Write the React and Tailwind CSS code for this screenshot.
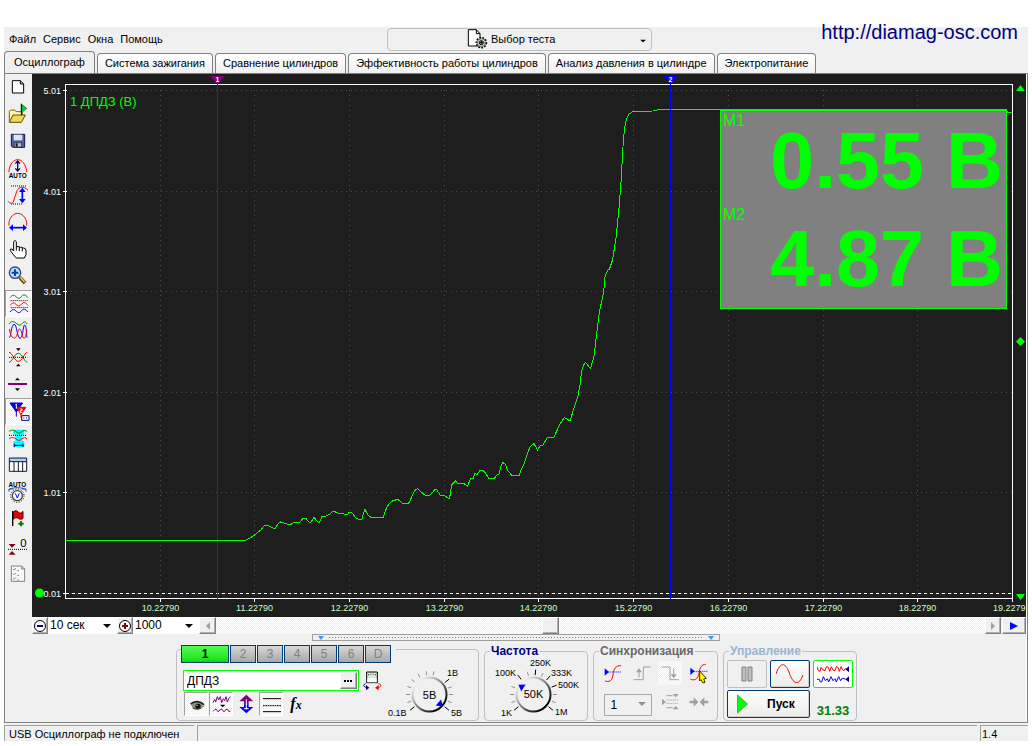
import React, { useState } from 'react';

const TABS = [
  'Осциллограф',
  'Система зажигания',
  'Сравнение цилиндров',
  'Эффективность работы цилиндров',
  'Анализ давления в цилиндре',
  'Электропитание',
];

const TRACE =
  '66,540.5 245.5,540.5 250,538 254,535.5 257,533 261,530 264,526 267.5,525.5 271,527 275,529 278,524 280.5,522 284,523 290,525 294,522.5 300,522 303,518.5 306,518.5 309,522 311,522 314,517.5 318,522 319.5,522 322,516.5 326,516 330,514 333,511 338,513 344,514 347,515 349,512.5 352,513 356,518 360,520 362,519 363.5,513 365,509.5 368,515 371,517.5 383,517.5 385,512 387,507 390,503 393,500.5 398,499.5 402,503 408,504 410,501 412,496 415,490.5 417.5,488.5 421,492 425,495 430,495 432,493 435,489.5 437,490 440,495 445,496 449,498.5 450.5,494 451.5,485 455.5,481 458,484 463,483 467.5,486 471,478 473,479 475,473.5 477,474.5 480,470.5 483,470 486,474 489,478.5 494,479 497,475 499,474 501,466 503,462.5 505,464 508,471 512,475.5 519,475.5 521,470 524,464 528,452 530,447 534,443.5 537.5,450 540,446 543,445 547,438 549,437 554,437 560,424 564.5,417.5 570,421 575,405 578,396 580,385 581.5,371.5 583.5,365 585.5,362.5 590.5,368.5 594,356.5 596.5,335 599.5,311.5 603.5,293 605,277 607.5,270.5 609.5,269 612.5,260 616,238 619,208 621,182 623.5,138 625.5,122 628.5,114.5 633,111.5 653,111 659.5,109.5 1006,109.5 1008,112.5 1012,112.5';

const X_TICKS = [
  [160.5, '10.22790'],
  [254.5, '11.22790'],
  [349.5, '12.22790'],
  [444.5, '13.22790'],
  [538.5, '14.22790'],
  [633.5, '15.22790'],
  [728.5, '16.22790'],
  [823.5, '17.22790'],
  [917.5, '18.22790'],
];

const Y_TICKS = [
  [90.5, '5.01'],
  [191.5, '4.01'],
  [291.5, '3.01'],
  [392.5, '2.01'],
  [492.5, '1.01'],
  [593.5, '0.01'],
];

// toolbar glyphs, each drawn in an 81x81 box
const TOOLS = [
  ['Новый', (
    <path d="M22 20H46L56 30V57H22ZM46 20V30H56" fill="#fff" stroke="#000" strokeWidth="3" />
  )],
  ['Открыть', (
    <>
      <path d="M13 64V31L17 27H29L33 32H52V42" fill="#ffffb0" stroke="#806000" strokeWidth="3" />
      <path d="M13 64L24 42H61L49 64Z" fill="#f0d860" stroke="#604800" strokeWidth="3" />
      <path d="M50 10L65 22L50 34Z" fill="#00d040" stroke="#006020" strokeWidth="2" />
      <path d="M49 8V42" stroke="#000" strokeWidth="3" />
    </>
  )],
  ['Сохранить', (
    <>
      <path d="M19 19H59V58H23L19 54Z" fill="#5060a8" stroke="#101840" strokeWidth="3" />
      <path d="M26 20H52V37H26Z" fill="#d8e8f0" />
      <path d="M28 44H50V57H28Z" fill="#c0c0c0" stroke="#202020" strokeWidth="2" />
      <path d="M32 46H38V56H32Z" fill="#101840" />
    </>
  )],
  ['Автомасштаб', (
    <>
      <path d="M12 52V46C15 27 25 14 38 14S61 27 65 46V52" fill="none" stroke="#f00" strokeWidth="3" />
      <path d="M38 20V46M31 26L38 18L45 26M31 40L38 48L45 40" fill="none" stroke="#000080" strokeWidth="4" />
      <text x="38" y="68" fontSize="19" fontWeight="bold" textAnchor="middle">AUTO</text>
    </>
  )],
  ['Размах', (
    <>
      <path d="M18 12H66M18 66H53" stroke="#000" strokeWidth="3" strokeDasharray="3 3" />
      <path d="M9 58C14 64 22 66 25 60C30 48 31 36 36 26C42 13 57 12 69 25" fill="none" stroke="#f00" strokeWidth="3" />
      <path d="M52 24V58" stroke="#00f" strokeWidth="5" />
      <path d="M52 17L62 30H42ZM52 64L62 51H42Z" fill="#00f" />
    </>
  )],
  ['Период', (
    <>
      <path d="M12 50V40C15 24 26 13 38 13S62 24 65 40V50" fill="none" stroke="#f00" strokeWidth="3" />
      <path d="M20 56H60" stroke="#00f" strokeWidth="5" />
      <path d="M12 56L24 46V66ZM66 56L54 46V66Z" fill="#00f" />
    </>
  )],
  ['Рука', (
    <path d="M26 45V17Q30 10 34 17V35L36 32H43V36L46 34H52V38L55 36Q62 36 63 42V56L58 66H34L26 57L16 44Q15 37 21 39ZM34 35V44M43 36V45M52 38V46" fill="#fff" stroke="#000" strokeWidth="3" />
  )],
  ['Лупа', (
    <>
      <path d="M44 43L60 60" stroke="#504020" strokeWidth="11" />
      <path d="M46 43L59 57" stroke="#f0c060" strokeWidth="5" />
      <circle cx="30" cy="29" r="17" fill="#b8dcff" stroke="#304878" strokeWidth="4" />
      <path d="M30 19V39M20 29H40" stroke="#1040a0" strokeWidth="6" />
    </>
  )],
  ['Все каналы', (
    <g fill="none" strokeWidth="3">
      <path d="M15 23C22 14 27 14 33 20S44 27 50 19S62 15 69 23" stroke="#008000" />
      <path d="M15 46C22 37 27 37 33 43S44 50 50 42S62 38 69 46" stroke="#f00" />
      <path d="M15 66C22 57 27 57 33 63S44 70 50 62S62 58 69 66" stroke="#00f" />
      <path d="M17 32H69M17 53H69" stroke="#000" strokeDasharray="3 3" />
    </g>
  ), true],
  ['Наложение', (
    <g fill="none" strokeWidth="3">
      <path d="M12 21C18 12 26 12 34 19S46 26 52 19S62 13 66 21" stroke="#008000" />
      <path d="M13 62C18 62 18 24 27 22S36 64 45 64S54 24 59 24S64 46 66 62" stroke="#00f" />
      <path d="M13 36C17 60 25 66 31 62S38 36 44 36S52 64 57 64S63 50 66 38" stroke="#f00" />
    </g>
  )],
  ['Сжать', (
    <g fill="none" strokeWidth="3">
      <path d="M12 25C22 26 28 52 40 52S58 26 67 25" stroke="#f00" />
      <path d="M12 55C22 54 28 28 40 28S58 54 67 55" stroke="#008000" />
      <path d="M12 40H67" stroke="#000" strokeDasharray="3 3" />
      <path d="M33 13H47L40 21ZM33 67H47L40 59Z" fill="#000" />
    </g>
  )],
  ['Уровень', (
    <>
      <path d="M30 28H45L37 20ZM30 52H45L37 60Z" fill="#000" />
      <path d="M9 39H66" stroke="#800080" strokeWidth="6" />
    </>
  )],
  ['Маркеры', (
    <>
      <path d="M15 15H53L34 42ZM34 38V56" fill="#0000d0" stroke="#0000d0" strokeWidth="3" />
      <path d="M35 28H63L48 50ZM48 46V60" fill="#f00" stroke="#f00" strokeWidth="3" />
      <path d="M31 20L34 18V32M46 33H51V38H46V43H52" fill="none" stroke="#fff" strokeWidth="3" />
      <path d="M50 53H72V67H50Z" fill="#fff" stroke="#000080" strokeWidth="3" />
      <path d="M55 60H58M63 60H66" stroke="#000080" strokeWidth="3" />
    </>
  ), true],
  ['Фильтр', (
    <>
      <path d="M25 14H58V24L52 34V48H58V67H25V48H31V34L25 24Z" fill="#0ff" />
      <path d="M12 20C18 14 26 14 33 20S44 25 50 20S62 15 66 20" fill="none" stroke="#008000" strokeWidth="3" />
      <path d="M12 31H66" stroke="#000" strokeWidth="3" strokeDasharray="3 3" />
      <path d="M12 42C18 36 26 36 33 42S44 47 50 42S62 37 66 42" fill="none" stroke="#f00" strokeWidth="3" />
      <path d="M28 61H54M28 56V66M54 56V66" stroke="#000080" strokeWidth="3" />
    </>
  )],
  ['Таблица', (
    <>
      <path d="M13 18H65V58H13Z" fill="#fff" />
      <path d="M13 18H65V29H13Z" fill="#a8d0f8" />
      <path d="M13 18H65V58H13ZM13 29H65M27 29V58M40 29V58M53 29V58" fill="none" stroke="#101830" strokeWidth="3" />
    </>
  )],
  ['Авто вольтметр', (
    <>
      <text x="37" y="23" fontSize="19" fontWeight="bold" textAnchor="middle">AUTO</text>
      <path d="M12 38V30H25M12 32C22 24 52 24 63 32M50 30H63V38" fill="none" stroke="#0060d0" strokeWidth="3" />
      <circle cx="37" cy="50" r="20" fill="none" stroke="#000" strokeWidth="3" strokeDasharray="3 5" />
      <circle cx="37" cy="50" r="15" fill="#fff" stroke="#404040" strokeWidth="4" />
      <path d="M31 43L37 57L43 43" fill="none" stroke="#00f" strokeWidth="3" />
    </>
  )],
  ['Добавить метку', (
    <>
      <path d="M24 19C30 12 36 14 41 19S50 20 54 16V37C48 42 44 40 40 37S30 34 24 40Z" fill="#e00000" stroke="#600000" strokeWidth="3" />
      <path d="M23 15V60" stroke="#000" strokeWidth="4" />
      <path d="M48 45V61M40 53H56" stroke="#008000" strokeWidth="6" />
    </>
  )],
  ['Сброс нуля', (
    <>
      <path d="M11 33H32L21 44ZM11 65H32L21 54Z" fill="#900010" />
      <path d="M9 49H66" stroke="#000" strokeWidth="3" strokeDasharray="3 3" />
      <text x="55" y="42" fontSize="34" textAnchor="middle">0</text>
    </>
  )],
  ['Отчёт', (
    <path d="M19 18H50L59 27V64H19ZM50 18V27H59M24 27L27 30L33 24M24 41L27 44L33 38M24 55L27 58L33 52M37 32H42M37 46H42M37 60H42" fill="#f8f8f8" stroke="#808080" strokeWidth="3" />
  )],
];

const Caret = ({ className, color = '#000' }) => (
  <svg viewBox="0 0 8 4" className={`pointer-events-none absolute h-1 w-2 ${className}`}>
    <path d="M0 0H8L4 4Z" fill={color} />
  </svg>
);

const RaisedButton = ({ label, className, children }) => (
  <button
    aria-label={label}
    className={`flex items-center justify-center border border-t-white border-l-white border-r-[#808080] border-b-[#808080] bg-[#f0f0f0] shadow-[inset_-1px_-1px_0_#b0b0b0] ${className}`}
  >
    {children}
  </button>
);

const IconButton = ({ label, pressed, className, children }) => (
  <button
    aria-label={label}
    aria-pressed={!!pressed}
    className={`flex shrink-0 items-center justify-center ${
      pressed
        ? 'border border-t-[#a0a0a0] border-l-[#a0a0a0] border-r-white border-b-white bg-[repeating-conic-gradient(#fff_0_25%,#f0f0f0_0_50%)] bg-[length:2px_2px]'
        : ''
    } ${className}`}
  >
    {children}
  </button>
);

// rotary switch: ticks is a list of [angle, isMain]
const Knob = ({ cx, cy, ticks, pointer, id }) => {
  const polar = (r, deg) => {
    const a = (deg * Math.PI) / 180;
    return [cx + r * Math.cos(a), cy - r * Math.sin(a)];
  };
  const [px, py] = polar(14, pointer);
  return (
    <g>
      <defs>
        <linearGradient id={id} x1="0" y1="0" x2="1" y2="1">
          <stop offset="0.1" stopColor="#fff" />
          <stop offset="0.5" stopColor="#808080" />
          <stop offset="0.85" stopColor="#000" />
        </linearGradient>
      </defs>
      {ticks.map(([deg, main]) => {
        const [x1, y1] = polar(19.5, deg);
        const [x2, y2] = polar(main ? 25 : 23.5, deg);
        return <line key={deg} x1={x1} y1={y1} x2={x2} y2={y2} stroke={main ? '#000' : '#909090'} />;
      })}
      <circle cx={cx} cy={cy} r="17" fill="#f0f0f0" stroke={`url(#${id})`} strokeWidth="2" />
      <path
        d="M4 0L-2 -4V4Z"
        fill="#00f"
        transform={`translate(${px} ${py}) rotate(${-pointer})`}
      />
    </g>
  );
};

const Chart = () => (
  <div className="relative bg-[#1e1e1e]">
    <svg viewBox="32 74 994 543" className="block w-full" fontSize="9" fontFamily="'Liberation Sans', Arial, sans-serif">
      <g stroke="#505050" strokeDasharray="1 4" shapeRendering="crispEdges">
        {X_TICKS.map(([x]) => <line key={x} x1={x} y1="90" x2={x} y2="598" />)}
        {Y_TICKS.map(([y]) => <line key={y} x1="66" y1={y} x2="1012" y2={y} />)}
      </g>
      <line x1="66" y1="593.5" x2="1012" y2="593.5" stroke="#fff" strokeDasharray="3 3" />
      <rect x="65.5" y="84.5" width="947" height="514" fill="none" stroke="#fff" />
      {Y_TICKS.map(([y, label]) => (
        <g key={label}>
          <line x1="63" y1={y} x2="67" y2={y} stroke="#fff" />
          <text x="61" y={y + 3} textAnchor="end" fill="#fff">{label}</text>
        </g>
      ))}
      {X_TICKS.map(([x, label]) => (
        <g key={label}>
          <line x1={x} y1="599" x2={x} y2="602" stroke="#fff" />
          <text x={x} y="611" textAnchor="middle" fill="#c8ffc8">{label}</text>
        </g>
      ))}
      <line x1="1012.5" y1="599" x2="1012.5" y2="602" stroke="#fff" />
      <text x="993" y="611" fill="#c8ffc8">19.2279</text>
      <text x="70" y="106" fontSize="13" fill="#0f0">1 ДПДЗ (В)</text>

      <line x1="217.5" y1="84" x2="217.5" y2="599" stroke="#800080" />
      <path d="M210 76H225L217.5 84Z" fill="#800080" />
      <text x="217.5" y="82" fontSize="7" fontWeight="bold" textAnchor="middle" fill="#fff">1</text>

      <polyline points={TRACE} fill="none" stroke="#0f0" strokeLinejoin="round" shapeRendering="crispEdges" />

      <line x1="670.5" y1="84" x2="670.5" y2="599" stroke="#00f" />
      <path d="M663 76H678L670.5 84Z" fill="#00f" />
      <text x="670.5" y="82" fontSize="7" fontWeight="bold" textAnchor="middle" fill="#fff">2</text>

      <circle cx="39.5" cy="593" r="4.5" fill="#0f0" />
      <path d="M1016 91H1025L1020.5 85ZM1020.5 337L1025 341.5L1020.5 346L1016 341.5ZM1016 594H1025L1020.5 600Z" fill="#0f0" />
    </svg>

    {/* measurements */}
    <div className="absolute top-9 right-[19px] flex w-[287px] justify-between border border-[#00ff00] bg-[#808080] pt-px pr-[3px] pl-0.5 text-[#00ff00]">
      <div className="text-[16px] leading-[18px]">
        <div className="h-[94px]">M1</div>
        <div>M2</div>
      </div>
      <div className="text-right text-[79px] leading-[98px] font-bold">
        <div>0.55 В</div>
        <div>4.87 В</div>
      </div>
    </div>
  </div>
);

const ScrollRow = () => (
  <div className="flex h-[17px] text-[12px]">
    <RaisedButton label="Уменьшить" className="w-4">
      <svg viewBox="0 0 14 14" className="h-3.5 w-3.5">
        <circle cx="7" cy="7" r="5.5" fill="#fff" stroke="#000" />
        <path d="M4 7H10" stroke="#000080" strokeWidth="2" />
      </svg>
    </RaisedButton>
    <span className="relative">
      <select aria-label="Длительность" className="block h-full w-[69px] appearance-none bg-white pl-0.5 leading-[17px]">
        <option>10 сек</option>
      </select>
      <Caret className="top-[7px] right-1.5" />
    </span>
    <RaisedButton label="Увеличить" className="w-4">
      <svg viewBox="0 0 14 14" className="h-3.5 w-3.5">
        <circle cx="7" cy="7" r="5.5" fill="#fff" stroke="#000" />
        <path d="M4 7H10M7 4V10" stroke="#900000" strokeWidth="2" />
      </svg>
    </RaisedButton>
    <span className="relative">
      <select aria-label="Точек" className="block h-full w-[66px] appearance-none bg-white pl-0.5 leading-[17px]">
        <option>1000</option>
      </select>
      <Caret className="top-[7px] right-1.5" />
    </span>
    <RaisedButton label="Влево" className="w-[17px]">
      <svg viewBox="0 0 4 8" className="h-2 w-1"><path d="M4 0V8L0 4Z" fill="#a0a0a0" /></svg>
    </RaisedButton>
    <div className="flex flex-1 bg-[repeating-conic-gradient(#fff_0_25%,#f0f0f0_0_50%)] bg-[length:2px_2px]">
      <div className="w-[42.4%]" />
      <RaisedButton label="Прокрутка" className="w-[17px]" />
    </div>
    <RaisedButton label="Вправо" className="w-4">
      <svg viewBox="0 0 4 8" className="h-2 w-1"><path d="M0 0V8L4 4Z" fill="#a0a0a0" /></svg>
    </RaisedButton>
    <RaisedButton label="В конец" className="ml-px w-6">
      <svg viewBox="0 0 8 8" className="h-2 w-2"><path d="M0 0V8L8 4Z" fill="#00f" /></svg>
    </RaisedButton>
  </div>
);

const ChannelGroup = () => {
  const [name, setName] = useState('ДПДЗ');
  return (
    <div className="mt-[5px] flex w-[303px] rounded-sm border border-[#c0c0c0]">
      <div className="ml-1 w-[206px] shrink-0">
        <div className="-mt-[5px] flex w-[215px] gap-px bg-[#f0f0f0] text-[12px]">
          {['1', '2', '3', '4', '5', '6', 'D'].map((ch) => (
            <button
              key={ch}
              className={
                ch === '1'
                  ? 'h-[18px] w-12 border border-[#003c74] bg-linear-to-b from-[#50ff50] to-[#00e000] leading-4 font-bold'
                  : 'h-[18px] w-[26px] border border-[#003c74] bg-linear-to-b from-[#d8d8d8] to-[#a8a8a8] leading-4 text-[#808080]'
              }
            >
              {ch}
            </button>
          ))}
        </div>
        <div className="mt-[7px] flex items-center gap-1 pl-0.5">
          <div className="flex h-[21px] w-44 items-center border border-[#00ff00] bg-white pr-px">
            <input
              aria-label="Название канала"
              value={name}
              onChange={(e) => setName(e.target.value)}
              className="w-0 flex-1 bg-white pl-[3px] text-[12px] outline-none"
            />
            <RaisedButton label="Выбрать датчик" className="h-[17px] w-[17px]">
              <svg viewBox="0 0 9 2" className="h-0.5 w-[9px]"><path d="M0 0H2V2H0ZM3 0H5V2H3ZM6 0H8V2H6Z" /></svg>
            </RaisedButton>
          </div>
          <button aria-label="Калибровка" className="shrink-0">
            <svg viewBox="0 0 57 60" className="h-5 w-[19px]" fill="none" strokeWidth="3">
              <path d="M11 3H43V35H11Z" fill="#d8ecd8" stroke="#000" />
              <path d="M13 22H41V34H13Z" fill="#fff" />
              <path d="M17 13V9M23 11V8M30 11V8M37 13V9" stroke="#404040" />
              <path d="M8 38C0 40 0 48 12 50" stroke="#000080" />
              <path d="M9 42L19 50L9 58Z" fill="#000080" />
              <path d="M46 38C56 38 56 48 46 50" stroke="#f00" />
              <path d="M47 42L36 50L47 58Z" fill="#f00" />
            </svg>
          </button>
        </div>
        <div className="flex gap-px pt-px pl-[3px]">
          <IconButton label="Показать" pressed className="h-6 w-6">
            <svg viewBox="0 0 72 72" className="h-6 w-6 shrink-0">
              <path d="M20 36C30 26 48 28 58 38C48 52 34 56 26 48Z" fill="#909080" />
              <path d="M20 36C30 26 48 26 60 38" fill="none" stroke="#202020" strokeWidth="5" />
              <circle cx="42" cy="43" r="8" fill="#101010" />
              <path d="M26 48C36 54 50 54 60 40" fill="none" stroke="#404040" strokeWidth="3" />
              <circle cx="39" cy="40" r="2" fill="#fff" />
            </svg>
          </IconButton>
          <IconButton label="Сглаживание" pressed className="h-6 w-6">
            <svg viewBox="0 0 72 72" className="h-6 w-6 shrink-0" fill="none" stroke="#800080" strokeWidth="3">
              <path d="M12 32L17 22L20 30L25 14L29 24L34 14L38 32L43 20L47 26L51 14L55 30L59 20L64 14" />
              <path d="M12 58L18 52H22L26 58H30L34 52H39L43 58H47L51 52H55L59 58H64" />
              <path d="M33 38H49L41 46Z" fill="#000" stroke="none" />
            </svg>
          </IconButton>
          <IconButton label="Инверсия" className="h-6 w-6">
            <svg viewBox="0 0 72 72" className="h-6 w-6">
              <path d="M37 8L58 28H44V37H30V28H16Z" fill="#800080" />
              <path d="M37 64L58 45H44V37H30V45H16Z" fill="#00f" />
              <path d="M37 22V52M30 50H44" stroke="#fff" strokeWidth="3" />
            </svg>
          </IconButton>
          <IconButton label="Линии" pressed className="h-6 w-6">
            <svg viewBox="0 0 72 72" className="h-6 w-6 shrink-0" stroke="#000" strokeWidth="3">
              <path d="M12 20H66M12 59H66" />
              <path d="M12 41H66" strokeDasharray="5 2" />
            </svg>
          </IconButton>
          <IconButton label="Функция" className="h-6 w-6">
            <span className="font-['Liberation_Serif',serif] text-[16px] leading-4 font-bold italic">
              f<span className="text-[12px]">x</span>
            </span>
          </IconButton>
        </div>
      </div>
      <svg viewBox="387 658 86 62" className="mt-2 h-[62px] w-[86px] shrink-0" fontSize="9">
        <Knob
          id="knobVolt"
          cx={429.5}
          cy={694.5}
          pointer={-42}
          ticks={[[219, 1], [200, 0], [180, 0], [160, 0], [140, 0], [119, 0], [98, 0], [79, 0], [38, 1], [19, 0], [0, 0], [-20, 0], [-39, 1]]}
        />
        <text x="429.5" y="699" fontSize="11" textAnchor="middle">5В</text>
        <text x="447" y="676">1В</text>
        <text x="388" y="716">0.1В</text>
        <text x="451" y="716">5В</text>
      </svg>
    </div>
  );
};

const Group = ({ title, titleClass, className, children }) => (
  <fieldset className={`rounded-sm border border-[#c0c0c0] ${className}`}>
    <legend className={`ml-[5px] px-px text-[12px] leading-[14px] font-bold ${titleClass}`}>{title}</legend>
    {children}
  </fieldset>
);

const FrequencyGroup = () => (
  <Group title="Частота" titleClass="text-[#000080]" className="w-[104px]">
    <svg viewBox="485 658 102 62" className="h-[62px] w-[102px]" fontSize="9">
      <Knob
        id="knobFreq"
        cx={533.5}
        cy={694.5}
        pointer={147}
        ticks={[[219, 1], [200, 0], [180, 0], [160, 0], [129, 1], [105, 0], [85, 1], [66, 0], [48, 1], [22, 1], [0, 0], [-20, 0], [-39, 1]]}
      />
      <text x="533.5" y="698" fontSize="11" textAnchor="middle">50K</text>
      <text x="530" y="666">250K</text>
      <text x="495" y="676">100K</text>
      <text x="551" y="676">333K</text>
      <text x="558" y="688">500K</text>
      <text x="501" y="716">1K</text>
      <text x="555" y="715">1M</text>
    </svg>
  </Group>
);

const SyncGroup = () => (
  <Group title="Синхронизация" titleClass="text-[#696969]" className="w-[125px]">
    <div className="mt-[3px] ml-[5px] grid grid-cols-4 justify-items-center gap-y-[5px] pr-1">
      <IconButton label="Синхронизация" className="h-6 w-6">
        <svg viewBox="0 0 72 72" className="h-6 w-6" fill="none" strokeWidth="3">
          <path d="M12 60C24 64 34 60 36 42C38 22 44 14 60 14" stroke="#f00" />
          <path d="M22 33H60" stroke="#00f" strokeDasharray="3 3" />
          <path d="M11 22V44L24 33Z" fill="#00f" />
        </svg>
      </IconButton>
      <IconButton label="По фронту" className="h-6 w-6">
        <svg viewBox="0 0 72 72" className="h-6 w-6" fill="none" stroke="#a0a0a0" strokeWidth="3">
          <path d="M11 56H40V18H62M27 50V24" />
          <path d="M18 34L27 22L36 34Z" fill="#a0a0a0" stroke="none" />
        </svg>
      </IconButton>
      <IconButton label="По спаду" className="h-6 w-6 bg-[repeating-conic-gradient(#fff_0_25%,#f0f0f0_0_50%)] bg-[length:2px_2px]">
        <svg viewBox="0 0 72 72" className="h-6 w-6" fill="none" stroke="#a0a0a0" strokeWidth="3">
          <path d="M11 18H36V56H62M47 22V48" />
          <path d="M38 40L47 52L56 40Z" fill="#a0a0a0" stroke="none" />
        </svg>
      </IconButton>
      <IconButton label="Выбор уровня" className="h-6 w-6">
        <svg viewBox="0 0 72 72" className="h-6 w-6" fill="none" strokeWidth="3">
          <path d="M10 54C20 60 32 56 36 38C38 20 44 10 56 10" stroke="#f00" />
          <path d="M22 31H64" stroke="#00f" strokeDasharray="3 3" />
          <path d="M10 20V42L23 31Z" fill="#00f" />
          <path d="M38 30L58 52L50 54L54 64L48 66L42 56L38 60Z" fill="#ff0" stroke="#403000" />
        </svg>
      </IconButton>
      <span className="relative col-span-2 mt-0.5">
        <select aria-label="Канал синхронизации" className="h-[22px] w-12 appearance-none border border-[#a8a8a8] bg-[#f0f0f0] pl-1.5 text-[12px]">
          <option>1</option>
        </select>
        <Caret className="top-[10px] right-1.5" color="#909090" />
      </span>
      <IconButton label="Зона" className="h-6 w-6">
        <svg viewBox="0 0 72 72" className="h-6 w-6" fill="none" stroke="#a0a0a0" strokeWidth="3">
          <path d="M26 17H44M26 53H44" />
          <path d="M26 30H62M26 40H62" strokeDasharray="3 3" />
          <path d="M12 26V46L24 36ZM44 12H62L53 22ZM44 58H62L53 48Z" fill="#a0a0a0" stroke="none" />
        </svg>
      </IconButton>
      <IconButton label="Свести" className="h-6 w-6">
        <svg viewBox="0 0 72 72" className="h-6 w-6" fill="#a0a0a0">
          <path d="M8 32H20V22L34 36L20 50V40H8ZM64 32H52V22L38 36L52 50V40H64Z" />
        </svg>
      </IconButton>
    </div>
  </Group>
);

const ControlGroup = () => (
  <Group title="Управление" titleClass="text-[#99b4d1]" className="w-[134px]">
    <div className="grid grid-cols-3 gap-x-[3px] gap-y-0.5 px-[3px] pt-0.5">
      <button aria-label="Пауза" className="flex h-7 items-center justify-center rounded-xs border border-[#c0c0c0] bg-[#f0f0f0]">
        <svg viewBox="0 0 12 16" className="h-4 w-3" fill="#c0c0c0" stroke="#808080">
          <path d="M1 1H5V15H1ZM7 1H11V15H7Z" />
        </svg>
      </button>
      <button aria-label="Синус" className="flex h-7 items-center justify-center rounded-xs border border-[#003c74] bg-linear-to-b from-white to-[#ececea] shadow-[inset_-1px_-1px_0_#d0d0cc]">
        <svg viewBox="0 0 28 20" className="h-5 w-7" fill="none" stroke="#f00">
          <path d="M0 10C4 -2 9 -2 13 8C17 21 23 22 27 11" />
        </svg>
      </button>
      <button aria-label="Самописец" className="flex h-7 items-center justify-center rounded-xs border border-[#00ff00] bg-white">
        <svg viewBox="0 0 96 60" className="h-5 w-8" fill="none" strokeWidth="3">
          <path d="M0 8L4 20L9 22L12 10L18 18L24 20L28 8L34 10L38 22L43 8L48 18L54 20L58 8L63 10L67 22L72 8L77 18L81 20L86 12" stroke="#f00" />
          <path d="M0 46H7L10 54H14L19 38L25 50L31 44L35 54L42 38L48 50L54 44L58 54L65 38L71 50L77 42L86 46" stroke="#00f" />
          <path d="M96 7V25L85 16ZM96 37V55L85 46Z" fill="#000080" />
        </svg>
      </button>
      <button className="col-span-2 flex h-7 items-center rounded-xs border border-[#003c74] bg-linear-to-b from-white to-[#ececea] pl-[9px] text-[12px] font-bold shadow-[inset_-1px_-1px_0_#d0d0cc]">
        <svg viewBox="0 0 11 20" className="mr-[19px] h-5 w-[11px]">
          <path d="M0.5 1V19L10.5 10Z" fill="#0f0" stroke="#60a060" />
        </svg>
        Пуск
      </button>
      <output className="self-end justify-self-center text-[13px] leading-[14px] font-bold text-[#008000]">31.33</output>
    </div>
  </Group>
);

const App = () => {
  const [tab, setTab] = useState(0);

  return (
    <div className="relative min-h-screen bg-white px-1 pt-[27px] font-['Liberation_Sans',Arial,sans-serif] text-black">
      <div className="flex flex-col bg-[#f0f0f0]">
        {/* menu */}
        <header className="flex h-6 items-center">
          <nav className="flex w-[383px] gap-[7px] pl-[5px] text-[11px]">
            {['Файл', 'Сервис', 'Окна', 'Помощь'].map((m) => <button key={m}>{m}</button>)}
          </nav>
          <div className="relative flex h-[23px] w-[265px] items-center rounded-sm border border-[#c0c0c0] pl-[79px]">
            <svg viewBox="0 0 66 66" className="mr-0.5 h-[22px] w-[22px]" strokeWidth="3">
              <path d="M4 5H28L39 17V54H4ZM28 5V17H39" fill="#fff" stroke="#000" />
              <circle cx="43" cy="44" r="15" fill="#c0d4c0" stroke="#000" strokeWidth="5" strokeDasharray="5 4" />
              <circle cx="43" cy="44" r="12" fill="#c0d4c0" stroke="#405040" strokeWidth="2" />
              <circle cx="43" cy="44" r="6" fill="#fff" stroke="#000" />
              <path d="M43 39V49M38 44H48" stroke="#000" />
            </svg>
            <select aria-label="Выбор теста" className="h-full flex-1 appearance-none bg-transparent text-[11px]">
              <option>Выбор теста</option>
            </select>
            <Caret className="top-[10px] right-1 scale-75" />
          </div>
        </header>

        <div className="flex h-[22px] items-end gap-0.5" role="tablist">
          {TABS.map((t, i) => (
            <button
              key={t}
              role="tab"
              aria-selected={tab === i}
              onClick={() => setTab(i)}
              className={`rounded-t-sm border border-b-0 border-[#808080] text-[11px] whitespace-nowrap ${
                tab === i
                  ? 'h-[22px] bg-[#f0f0f0] px-[9px]'
                  : 'h-5 bg-linear-to-b from-white to-[#f0f0f0] px-[7px]'
              }`}
            >
              {t}
            </button>
          ))}
        </div>

        <main className="flex border border-[#808080]">
          <div className="flex w-[27px] flex-col" role="toolbar">
            {TOOLS.map(([label, glyph, pressed]) => (
              <IconButton key={label} label={label} pressed={pressed} className="h-[27px] w-[27px]">
                <svg viewBox="0 0 81 81" className="h-[27px] w-[27px] shrink-0">{glyph}</svg>
              </IconButton>
            ))}
          </div>

          <div className="min-w-0 flex-1 border-r border-white">
            <Chart />
            <ScrollRow />
            <div className="ml-[280px] flex h-[7px] w-[408px] items-center border border-[#a0a0a0] px-1">
              <svg viewBox="0 0 8 4" className="h-1 w-2"><path d="M1 0H7L4 4Z" fill="#3399ff" /></svg>
              <span className="mx-1 h-px flex-1 bg-[repeating-linear-gradient(90deg,#3399ff_0_1px,transparent_1px_3px)]" />
              <svg viewBox="0 0 8 4" className="h-1 w-2"><path d="M1 0H7L4 4Z" fill="#3399ff" /></svg>
            </div>
            <div className="flex gap-[5px] pt-[3px] pb-px pl-36">
              <ChannelGroup />
              <FrequencyGroup />
              <SyncGroup />
              <ControlGroup />
            </div>
          </div>
        </main>

        <footer className="mt-0.5 flex h-4 gap-[3px] text-[11px] leading-4 whitespace-nowrap">
          <span className="w-[190px] border-t border-l border-[#a0a0a0] pl-1">USB Осциллограф не подключен</span>
          <span className="flex-1 border-t border-l border-[#a0a0a0]" />
          <span className="w-12 border-t border-l border-[#a0a0a0] pl-px">1.4</span>
        </footer>
      </div>

      <a href="http://diamag-osc.com" className="absolute top-5 right-3.5 text-[20px] leading-6 text-[#000080]">
        http://diamag-osc.com
      </a>
    </div>
  );
};

export default App;
